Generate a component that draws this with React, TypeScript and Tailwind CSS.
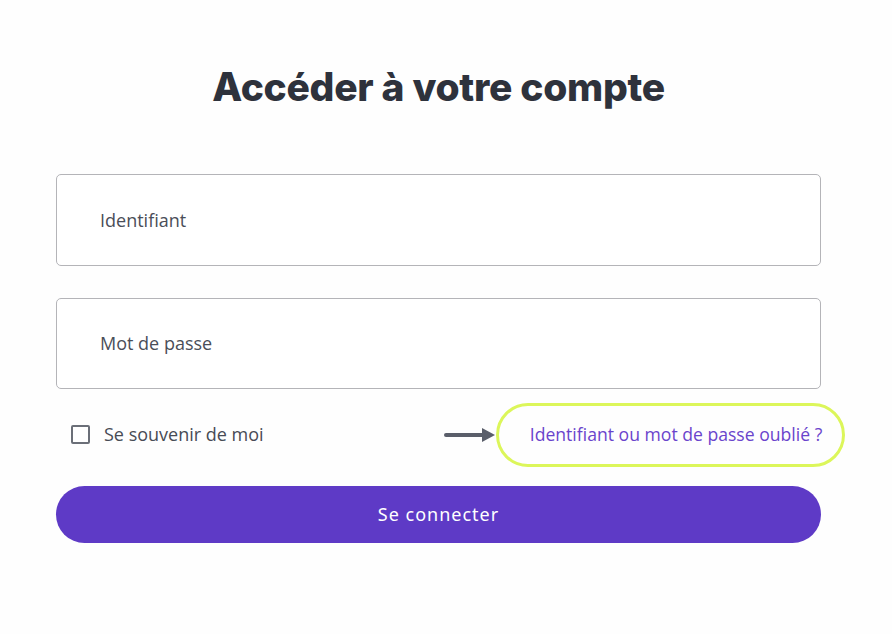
import { useState } from 'react';

function ArrowRight() {
	return (
		<svg width="52" height="18" viewBox="0 0 52 18" className="shrink-0">
			<line x1="2" y1="9" x2="40" y2="9" stroke="#5a5e6a" strokeWidth="4" strokeLinecap="round" />
			<path d="M38 2 L51 9 L38 16 Z" fill="#5a5e6a" />
		</svg>
	);
}

export default function App() {
	const [remember, setRemember] = useState(false);

	return (
		<div className="min-h-[634px] w-full bg-[#fefefe] font-['Open_Sans',sans-serif]">
			<div className="ml-[56px] w-[765px] pt-[58px]">
				<h1 className="text-center font-['Inter',sans-serif] text-[39px] font-extrabold tracking-[-0.3px] text-[#2e323c]">
					Accéder à votre compte
				</h1>

				<div className="mt-[57px] flex flex-col gap-[32px]">
					<input
						placeholder="Identifiant"
						className="h-[92px] w-full rounded-[5px] border border-[#b4b4b8] bg-white px-[43px] text-[18px] text-[#3c404a] outline-none placeholder:text-[#4a4e58]"
					/>
					<input
						type="password"
						placeholder="Mot de passe"
						className="h-[91px] w-full rounded-[5px] border border-[#b4b4b8] bg-white px-[43px] text-[18px] text-[#3c404a] outline-none placeholder:text-[#4a4e58]"
					/>
				</div>

				<div className="mt-[14px] flex h-[64px] items-center">
					<label className="ml-[15px] flex cursor-pointer items-center gap-[14px]">
						<span
							onClick={() => setRemember(!remember)}
							className="flex h-[19px] w-[19px] items-center justify-center rounded-[2px] border-2 border-[#6b6f78] bg-white"
						>
							{remember && <span className="h-[9px] w-[9px] bg-[#5e3ac6]" />}
						</span>
						<span className="text-[18px] text-[#474b55]">Se souvenir de moi</span>
					</label>

					<div className="ml-auto mr-[-24px] flex items-center">
						<ArrowRight />
						<a
							href="#"
							className="flex h-[64px] w-[349px] items-center justify-center rounded-full border-[3px] border-[#dcf65a] pl-[11px] text-[17.6px] text-[#6a44cc]"
						>
							Identifiant ou mot de passe oublié ?
						</a>
					</div>
				</div>

				<button className="mt-[19px] h-[57px] w-full rounded-full bg-[#5e3ac6] font-['Noto_Sans',sans-serif] text-[18px] font-normal tracking-[1px] text-white">
					Se connecter
				</button>
			</div>
		</div>
	);
}
